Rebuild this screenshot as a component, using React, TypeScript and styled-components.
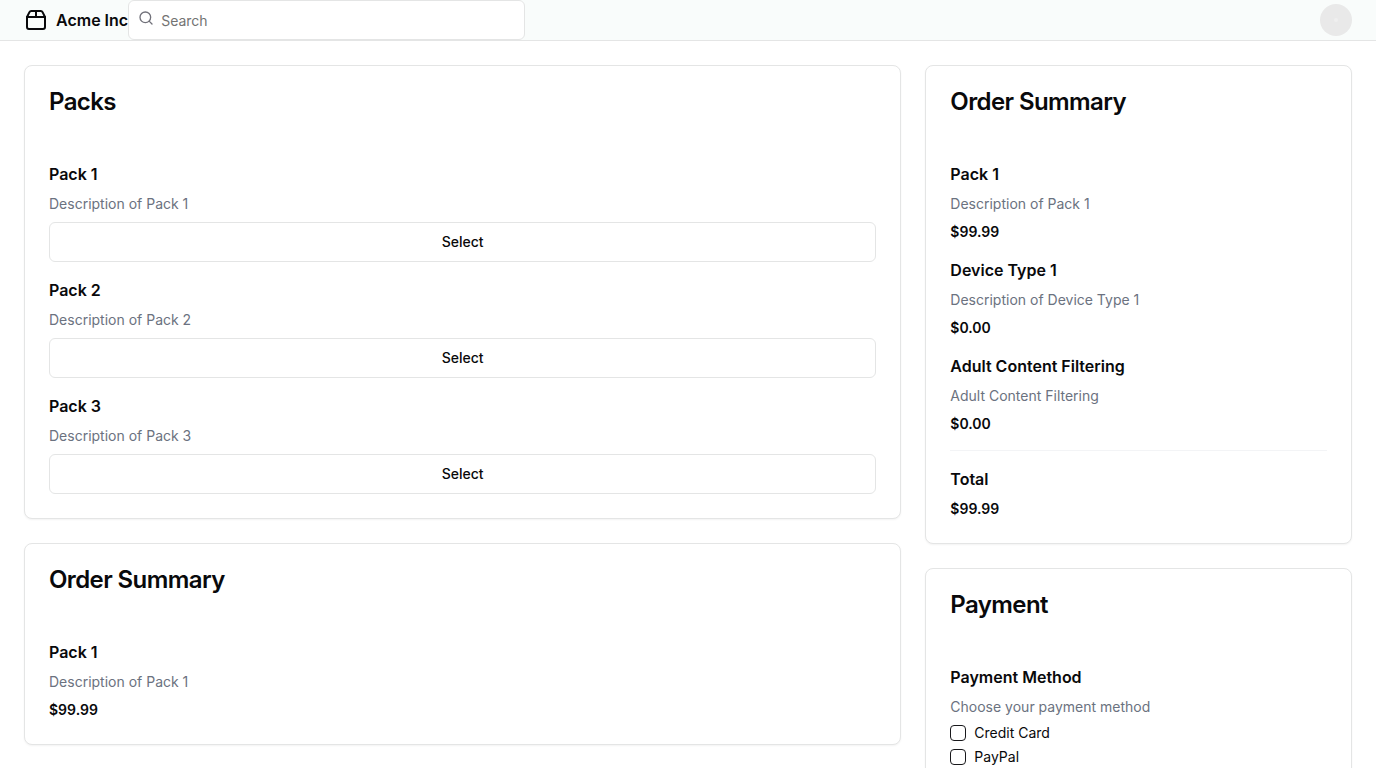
import React from "react";
import styled, { createGlobalStyle } from "styled-components";

const GlobalStyle = createGlobalStyle`
  *, *::before, *::after { box-sizing: border-box; }
  body {
    margin: 0;
    background: #ffffff;
    color: #09090b;
    font-family: Inter, "Liberation Sans", sans-serif;
    font-size: 16px;
    line-height: 24px;
  }
  h1, h2, h3, p { margin: 0; }
`;

const Header = styled.header`
  display: flex;
  align-items: center;
  padding: 0 24px;
  border-bottom: 1px solid #e4e5e5;
  background: #f9fcfb;
`;

const Brand = styled.a`
  display: flex;
  flex-shrink: 0;
  align-items: center;
  gap: 8px;
  color: inherit;
  font-weight: 600;
  text-decoration: none;
`;

const HeaderMain = styled.div`
  display: flex;
  flex: 1;
`;

const SearchForm = styled.form`
  position: relative;
  width: calc(100% / 3);
`;

const SearchIcon = styled.svg`
  position: absolute;
  top: 10px;
  left: 10px;
  color: #71717a;
`;

const SearchInput = styled.input`
  display: block;
  width: 100%;
  height: 40px;
  padding: 8px 12px 8px 32px;
  border: 1px solid #e4e5e5;
  border-radius: 6px;
  background: #ffffff;
  color: inherit;
  font: inherit;
  font-size: 14px;
  line-height: 20px;
  &::placeholder { color: #737373; opacity: 1; }
`;

const Avatar = styled.button`
  display: flex;
  align-items: center;
  justify-content: center;
  width: 32px;
  height: 32px;
  padding: 0;
  border: 0;
  border-radius: 50%;
  background: #e9e9e9;
  color: #efefef;
`;

const Main = styled.main`
  display: grid;
  grid-template-columns: repeat(3, minmax(0, 1fr));
  align-items: start;
  gap: 24px;
  padding: 24px;
`;

const Column = styled.div<{ $span: number }>`
  display: grid;
  grid-column: span ${(p) => p.$span};
  gap: 24px;
`;

const CardBox = styled.section`
  border: 1px solid #e4e5e5;
  border-radius: 8px;
  background: #ffffff;
  box-shadow: 0 1px 2px rgba(0, 0, 0, 0.05);
`;

const CardTitle = styled.h2`
  padding: 24px;
  font-size: 24px;
  font-weight: 600;
  line-height: 24px;
  letter-spacing: -0.025em;
`;

const CardBody = styled.div`
  display: grid;
  gap: 16px;
  padding: 24px;
`;

const Group = styled.div`
  display: grid;
  gap: 8px;
`;

const ItemTitle = styled.h3`
  font-size: 16px;
  font-weight: 600;
  line-height: 24px;
`;

const Description = styled.p`
  color: #6b7280;
  font-size: 14px;
  line-height: 20px;
`;

const Price = styled.p`
  font-size: 14px;
  font-weight: 600;
  line-height: 20px;
`;

const SelectButton = styled.button`
  height: 40px;
  padding: 8px 16px;
  border: 1px solid #e4e5e5;
  border-radius: 6px;
  background: #ffffff;
  color: inherit;
  font: inherit;
  font-size: 14px;
  font-weight: 500;
  line-height: 20px;
  cursor: pointer;
`;

const Divider = styled.hr`
  width: 100%;
  height: 1px;
  margin: 0;
  border: 0;
  background: #f3f4f6;
`;

const Option = styled.label`
  display: flex;
  align-items: center;
  gap: 8px;
  font-size: 14px;
  line-height: 16px;
`;

const Checkbox = styled.input`
  width: 16px;
  height: 16px;
  margin: 0;
  border: 1px solid #18181b;
  border-radius: 4px;
  appearance: none;
  &:checked { background: #18181b; }
`;

type Item = { title: string; description: string; price?: string };

const packs: Item[] = [1, 2, 3].map((n) => ({
  title: `Pack ${n}`,
  description: `Description of Pack ${n}`,
}));

const order: Item[] = [
  { title: "Pack 1", description: "Description of Pack 1", price: "$99.99" },
  { title: "Device Type 1", description: "Description of Device Type 1", price: "$0.00" },
  { title: "Adult Content Filtering", description: "Adult Content Filtering", price: "$0.00" },
];

function Card({ title, children }: { title: string; children: React.ReactNode }) {
  return (
    <CardBox>
      <CardTitle>{title}</CardTitle>
      <CardBody>{children}</CardBody>
    </CardBox>
  );
}

function OrderItem({ item }: { item: Item }) {
  return (
    <Group>
      <ItemTitle>{item.title}</ItemTitle>
      <Description>{item.description}</Description>
      <Price>{item.price}</Price>
    </Group>
  );
}

const stroke = {
  viewBox: "0 0 24 24",
  fill: "none",
  stroke: "currentColor",
  strokeWidth: 2,
  strokeLinecap: "round",
  strokeLinejoin: "round",
} as const;

export default function App() {
  return (
    <>
      <GlobalStyle />
      <Header>
        <Brand href="#">
          <svg width="24" height="24" aria-hidden="true" {...stroke}>
            <path d="M3 9h18v10a2 2 0 0 1-2 2H5a2 2 0 0 1-2-2V9Z" />
            <path d="m3 9 2.45-4.9A2 2 0 0 1 7.24 3h9.52a2 2 0 0 1 1.8 1.1L21 9" />
            <path d="M12 3v6" />
          </svg>
          <span>Acme Inc</span>
        </Brand>
        <HeaderMain>
          <SearchForm role="search">
            <SearchIcon width="16" height="16" aria-hidden="true" {...stroke}>
              <circle cx="11" cy="11" r="8" />
              <path d="m21 21-4.3-4.3" />
            </SearchIcon>
            <SearchInput type="search" placeholder="Search" aria-label="Search" />
          </SearchForm>
        </HeaderMain>
        <Avatar type="button" aria-label="Account menu">
          <svg width="6" height="6" viewBox="0 0 6 6" aria-hidden="true">
            <circle cx="3" cy="3" r="2" fill="currentColor" />
          </svg>
        </Avatar>
      </Header>
      <Main>
        <Column $span={2}>
          <Card title="Packs">
            {packs.map((pack) => (
              <Group key={pack.title}>
                <ItemTitle>{pack.title}</ItemTitle>
                <Description>{pack.description}</Description>
                <SelectButton type="button">Select</SelectButton>
              </Group>
            ))}
          </Card>
          <Card title="Order Summary">
            <OrderItem item={order[0]} />
          </Card>
        </Column>
        <Column $span={1}>
          <Card title="Order Summary">
            {order.map((item) => (
              <OrderItem key={item.title} item={item} />
            ))}
            <Divider />
            <Group>
              <ItemTitle>Total</ItemTitle>
              <Price>$99.99</Price>
            </Group>
          </Card>
          <Card title="Payment">
            <Group>
              <ItemTitle>Payment Method</ItemTitle>
              <Description>Choose your payment method</Description>
              <Option>
                <Checkbox type="checkbox" />
                Credit Card
              </Option>
              <Option>
                <Checkbox type="checkbox" />
                PayPal
              </Option>
            </Group>
          </Card>
        </Column>
      </Main>
    </>
  );
}
